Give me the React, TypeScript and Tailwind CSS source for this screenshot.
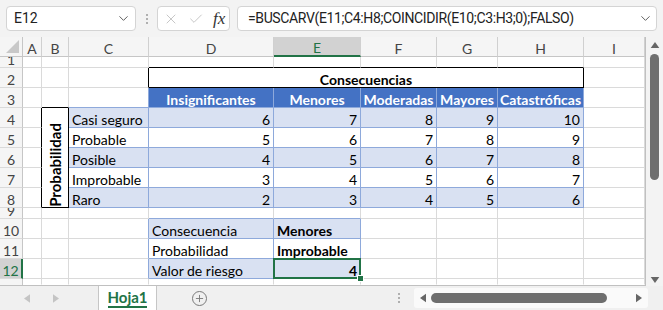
import type { ReactNode } from 'react';
import { ChevronDown, X, Check, Plus } from 'lucide-react';

const LINE = 'border-r-[#dadada]';
const LINE_B = 'border-b-[#dadada]';

function Cell({
  r = LINE,
  b = LINE_B,
  className = '',
  children,
}: {
  r?: string;
  b?: string;
  className?: string;
  children?: ReactNode;
}) {
  return (
    <div
      className={`flex min-w-0 items-end overflow-hidden whitespace-nowrap border-r border-b px-[3px] leading-[15px] ${r} ${b} ${className}`}
    >
      {children}
    </div>
  );
}

function RowHead({ n, sel = false }: { n: number; sel?: boolean }) {
  return (
    <div
      className={[
        'flex items-end justify-center overflow-hidden border-b border-b-[#dadada] leading-[15px] text-[14px]',
        sel
          ? 'border-r-2 border-r-[#217346] bg-[#d2d2d2] text-[#217346]'
          : 'border-r border-r-[#c6c6c6] bg-[#f5f5f5] text-[#444]',
      ].join(' ')}
    >
      {n}
    </div>
  );
}

function ColHead({ label, sel = false }: { label: string; sel?: boolean }) {
  return (
    <div
      className={[
        'flex items-center justify-center border-r border-r-[#d0d0d0] pt-[3px] text-[14px]',
        sel
          ? 'border-b-2 border-b-[#217346] bg-[#d2d2d2] text-[#217346]'
          : 'border-b border-b-[#c6c6c6] bg-[#f5f5f5] text-[#444]',
      ].join(' ')}
    >
      {label}
    </div>
  );
}

const BL_R = 'border-r-[#8ea9db]';
const BL_B = 'border-b-[#8ea9db]';

const matrix: [string, number[]][] = [
  ['Casi seguro', [6, 7, 8, 9, 10]],
  ['Probable', [5, 6, 7, 8, 9]],
  ['Posible', [4, 5, 6, 7, 8]],
  ['Improbable', [3, 4, 5, 6, 7]],
  ['Raro', [2, 3, 4, 5, 6]],
];

const heads = ['Insignificantes', 'Menores', 'Moderadas', 'Mayores', 'Catastróficas'];

function Sheet() {
  return (
    <div className="grid grid-cols-[23px_19px_27px_80px_125px_87px_76px_61px_86px_61px] grid-rows-[20px_11px_20px_20px_20px_20px_20px_20px_20px_11px_20px_20px_20px_6px] border-b border-b-[#c0c0c0] bg-white font-['Lato',sans-serif] text-[14px] text-black">
      {/* column headers */}
      <div className="relative border-r border-b border-r-[#c6c6c6] border-b-[#c6c6c6] bg-[#f5f5f5]">
        <div className="absolute right-[3px] bottom-[3px] h-0 w-0 border-b-[13px] border-l-[13px] border-b-[#c8c8c8] border-l-transparent" />
      </div>
      {['A', 'B', 'C', 'D', 'E', 'F', 'G', 'H', 'I'].map((c) => (
        <ColHead key={c} label={c} sel={c === 'E'} />
      ))}

      {/* row 1 */}
      <RowHead n={1} />
      <Cell />
      <Cell />
      <Cell />
      <Cell b="border-b-black" />
      <Cell b="border-b-black" />
      <Cell b="border-b-black" />
      <Cell b="border-b-black" />
      <Cell b="border-b-black" />
      <Cell />

      {/* row 2 */}
      <RowHead n={2} />
      <Cell />
      <Cell />
      <Cell r="border-r-black" />
      <Cell r="border-r-black" b="border-b-black" className="col-span-5 justify-center font-bold">
        Consecuencias
      </Cell>
      <Cell />

      {/* row 3 */}
      <RowHead n={3} />
      <Cell />
      <Cell b="border-b-black" />
      <Cell r={BL_R} b={BL_B} />
      {heads.map((h) => (
        <Cell key={h} r={BL_R} b={BL_B} className="justify-center bg-[#4472c4] font-bold text-white">
          {h}
        </Cell>
      ))}
      <Cell />

      {/* rows 4-8 */}
      {matrix.map(([label, vals], i) => {
        const band = i % 2 === 0 ? 'bg-[#d9e1f2]' : 'bg-white';
        return [
          <RowHead key={`h${i}`} n={4 + i} />,
          <Cell key={`a${i}`} r="border-r-black" />,
          i === 0 ? (
            <Cell
              key="prob"
              r="border-r-black"
              b="border-b-black"
              className="row-span-5 items-center justify-center"
            >
              <span className="rotate-180 text-[15px] font-bold leading-none [writing-mode:vertical-rl]">
                Probabilidad
              </span>
            </Cell>
          ) : null,
          <Cell key={`c${i}`} r={BL_R} b={BL_B} className={band}>
            {label}
          </Cell>,
          ...vals.map((v, j) => (
            <Cell key={`v${i}${j}`} r={BL_R} b={BL_B} className={`justify-end ${band}`}>
              {v}
            </Cell>
          )),
          <Cell key={`i${i}`} />,
        ];
      })}

      {/* row 9 */}
      <RowHead n={9} />
      <Cell />
      <Cell />
      <Cell />
      <Cell b={BL_B} />
      <Cell b={BL_B} />
      <Cell />
      <Cell />
      <Cell />
      <Cell />

      {/* row 10 */}
      <RowHead n={10} />
      <Cell />
      <Cell />
      <Cell r={BL_R} />
      <Cell r={BL_R} b={BL_B} className="bg-[#d9e1f2]">
        Consecuencia
      </Cell>
      <Cell r={BL_R} b={BL_B} className="bg-[#d9e1f2] font-bold">
        Menores
      </Cell>
      <Cell />
      <Cell />
      <Cell />
      <Cell />

      {/* row 11 */}
      <RowHead n={11} />
      <Cell />
      <Cell />
      <Cell r={BL_R} />
      <Cell r={BL_R} b={BL_B}>
        Probabilidad
      </Cell>
      <Cell r={BL_R} b={BL_B} className="font-bold">
        Improbable
      </Cell>
      <Cell />
      <Cell />
      <Cell />
      <Cell />

      {/* row 12 */}
      <RowHead n={12} sel />
      <Cell />
      <Cell />
      <Cell r={BL_R} />
      <Cell r={BL_R} b={BL_B} className="bg-[#d9e1f2]">
        Valor de riesgo
      </Cell>
      <Cell r={BL_R} b={BL_B} className="relative justify-end overflow-visible bg-[#d9e1f2] font-bold">
        4
        <div className="pointer-events-none absolute -top-px -left-px -right-px -bottom-px border-2 border-[#217346]" />
        <div className="absolute -right-[4px] -bottom-[4px] h-[7px] w-[7px] border border-white bg-[#217346]" />
      </Cell>
      <Cell />
      <Cell />
      <Cell />
      <Cell />

      {/* row 13 partial */}
      <div className="border-r border-r-[#c6c6c6] bg-[#f5f5f5]" />
      <Cell b="border-b-transparent" />
      <Cell b="border-b-transparent" />
      <Cell b="border-b-transparent" />
      <Cell b="border-b-transparent" />
      <Cell b="border-b-transparent" />
      <Cell b="border-b-transparent" />
      <Cell b="border-b-transparent" />
      <Cell b="border-b-transparent" />
      <Cell b="border-b-transparent" />
    </div>
  );
}

function Triangle({ dir, className }: { dir: 'up' | 'down' | 'left' | 'right'; className?: string }) {
  const d = {
    up: 'M0 7 L5 0 L10 7 Z',
    down: 'M0 0 L10 0 L5 7 Z',
    left: 'M7 0 L7 10 L0 5 Z',
    right: 'M0 0 L7 5 L0 10 Z',
  }[dir];
  const vb = dir === 'up' || dir === 'down' ? '0 0 10 7' : '0 0 7 10';
  return (
    <svg viewBox={vb} className={className}>
      <path d={d} fill="currentColor" />
    </svg>
  );
}

function Dots() {
  return (
    <div className="flex flex-col gap-[2px]">
      <span className="h-[2px] w-[2px] rounded-full bg-[#9a9a9a]" />
      <span className="h-[2px] w-[2px] rounded-full bg-[#9a9a9a]" />
      <span className="h-[2px] w-[2px] rounded-full bg-[#9a9a9a]" />
    </div>
  );
}

export default function App() {
  return (
    <div className="flex h-[310px] w-[663px] flex-col overflow-hidden bg-white font-['Roboto',sans-serif]">
      {/* formula bar */}
      <div className="flex h-[38px] items-center bg-[#f3f3f3] pr-[6px] pl-[6px]">
        <div className="flex h-[25px] w-[130px] items-center justify-between rounded-[4px] border border-[#d4d4d4] bg-white pr-[4px] pl-[7px] text-[14px] text-[#222]">
          E12
          <ChevronDown size={15} strokeWidth={1.5} className="text-[#555]" />
        </div>
        <div className="flex w-[21px] justify-center">
          <Dots />
        </div>
        <div className="flex h-[25px] w-[73px] items-center gap-[9px] rounded-[4px] border border-[#d4d4d4] bg-white pl-[5px] text-[#b8b8b8]">
          <X size={16} strokeWidth={1.2} />
          <Check size={16} strokeWidth={1.2} />
          <span className="font-['Liberation_Serif',serif] text-[17px] italic leading-none text-[#333]">
            fx
          </span>
        </div>
        <div className="ml-[7px] flex h-[25px] flex-1 items-center justify-between rounded-[4px] border border-[#d4d4d4] bg-white pr-[3px] pl-[10px] text-[14px] tracking-[-0.37px] text-[#222]">
          =BUSCARV(E11;C4:H8;COINCIDIR(E10;C3:H3;0);FALSO)
          <ChevronDown size={15} strokeWidth={1.5} className="text-[#555]" />
        </div>
      </div>

      {/* grid + vertical scrollbar */}
      <div className="flex">
        <Sheet />
        <div className="flex w-[18px] flex-col items-center border-l border-l-[#c0c0c0] bg-[#f3f3f3] pt-[5px] text-[#666]">
          <Triangle dir="up" className="h-[6px] w-[10px]" />
          <div className="mt-[6px] h-[126px] w-[9px] rounded-full bg-[#6e6e6e]" />
          <div className="flex-1" />
          <Triangle dir="down" className="mb-[3px] h-[6px] w-[10px]" />
        </div>
      </div>

      {/* sheet tabs */}
      <div className="flex h-[24px] items-stretch bg-[#f0f0f0]">
        <div className="flex w-[98px] items-center pl-[24px] text-[#c4c4c4]">
          <Triangle dir="left" className="h-[9px] w-[6px]" />
          <Triangle dir="right" className="ml-[23px] h-[9px] w-[6px]" />
        </div>
        <div className="relative flex w-[59px] items-center justify-center border-x border-[#c6c6c6] bg-white pb-[2px] font-['Lato',sans-serif] text-[15px] font-bold text-[#217346]">
          Hoja1
          <div className="absolute right-[9px] bottom-[2px] left-[9px] h-[2px] bg-[#217346]" />
        </div>
        <div className="flex w-[84px] items-center justify-center">
          <div className="flex h-[15px] w-[15px] items-center justify-center rounded-full border border-[#7a7a7a] text-[#7a7a7a]">
            <Plus size={11} strokeWidth={2} />
          </div>
        </div>
        <div className="flex flex-1 items-center justify-end pr-[14px]">
          <Dots />
        </div>
        <div className="my-[2px] flex w-[234px] items-center rounded-[3px] bg-[#fafafa] px-[6px] text-[#666]">
          <Triangle dir="left" className="h-[10px] w-[6px]" />
          <div className="ml-[5px] h-[10px] w-[176px] rounded-full bg-[#6e6e6e]" />
          <div className="flex-1" />
          <Triangle dir="right" className="h-[10px] w-[6px]" />
        </div>
        <div className="w-[15px]" />
      </div>
    </div>
  );
}
